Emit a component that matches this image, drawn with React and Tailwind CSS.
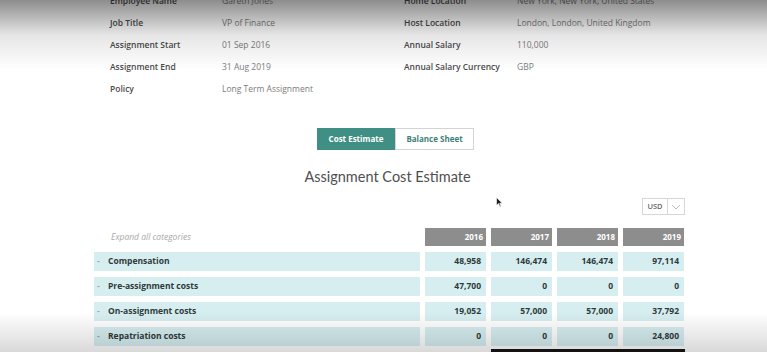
import React from "react";

const details = [
  ["Employee Name", "Gareth Jones", "Home Location", "New York, New York, United States"],
  ["Job Title", "VP of Finance", "Host Location", "London, London, United Kingdom"],
  ["Assignment Start", "01 Sep 2016", "Annual Salary", "110,000"],
  ["Assignment End", "31 Aug 2019", "Annual Salary Currency", "GBP"],
  ["Policy", "Long Term Assignment", "", ""],
];

const years = ["2016", "2017", "2018", "2019"];

const rows = [
  { name: "Compensation", values: ["48,958", "146,474", "146,474", "97,114"] },
  { name: "Pre-assignment costs", values: ["47,700", "0", "0", "0"] },
  { name: "On-assignment costs", values: ["19,052", "57,000", "57,000", "37,792"] },
  { name: "Repatriation costs", values: ["0", "0", "0", "24,800"] },
];

export default function App() {
  return (
    <div
      className="relative w-[767px] h-[352px] overflow-hidden bg-white"
      style={{ fontFamily: "'Open Sans', 'Liberation Sans', sans-serif" }}
    >
      {/* Assignment details */}
      <div className="-mt-[10px] flex flex-col">
        {details.map(([l1, v1, l2, v2]) => (
          <div key={l1} className="flex h-[22px] items-center text-[8.5px]">
            <div className="w-[110px]" />
            <div className="w-[112px] font-semibold text-[#4a4a4a]">{l1}</div>
            <div className="w-[182px] text-[#7c7c7c]">{v1}</div>
            <div className="w-[113px] font-semibold text-[#4a4a4a]">{l2}</div>
            <div className="text-[#7c7c7c]">{v2}</div>
          </div>
        ))}
      </div>

      {/* Tabs */}
      <div className="mt-[28px] flex justify-center pl-[24px]">
        <div className="flex h-[22px] text-[8px] font-bold">
          <div className="flex w-[78px] items-center justify-center bg-[#3f8f84] text-white">
            Cost Estimate
          </div>
          <div className="flex w-[79px] items-center justify-center border border-[#d4d4d4] text-[#3f7f78]">
            Balance Sheet
          </div>
        </div>
      </div>

      {/* Title */}
      <div
        className="mt-[18px] pl-[8px] text-center text-[14.5px] leading-[18px] text-[#4f4f4f]"
        style={{ fontFamily: "Lato, 'Noto Sans', sans-serif" }}
      >
        Assignment Cost Estimate
      </div>

      {/* Currency select */}
      <div className="mt-[12px] flex justify-end pr-[82px]">
        <div className="flex h-[17px] border border-[#d6d6d6] text-[7.5px]">
          <div className="flex w-[24px] items-center justify-center font-semibold text-[#666]">USD</div>
          <div className="flex w-[17px] items-center justify-center border-l border-[#d6d6d6]">
            <svg width="10" height="6" viewBox="0 0 10 6">
              <path d="M1 1 L5 5 L9 1" fill="none" stroke="#bbb" strokeWidth="1" />
            </svg>
          </div>
        </div>
      </div>

      {/* Table */}
      <div className="mt-[13px] ml-[94px] flex w-[591px] flex-col gap-[6px]">
        <div className="flex h-[18px] gap-[5px]">
          <div className="flex w-[326px] items-center pl-[17px] text-[8.5px] italic text-[#a8a8a8]">
            Expand all categories
          </div>
          {years.map((y) => (
            <div
              key={y}
              className="flex w-[61px] items-center justify-end bg-[#8d8d8d] pr-[3px] text-[8px] font-bold text-white"
            >
              {y}
            </div>
          ))}
        </div>
        {rows.map((r) => (
          <div key={r.name} className="flex h-[19px] gap-[5px] text-[8.5px] font-bold text-[#2f3a3a]">
            <div className="flex w-[326px] items-center bg-[#d6eef0]">
              <span className="w-[14px] pl-[3px] text-[#9ab]">-</span>
              <span>{r.name}</span>
            </div>
            {r.values.map((v, i) => (
              <div key={i} className="flex w-[61px] items-center justify-end bg-[#d6eef0] pr-[5px]">
                {v}
              </div>
            ))}
          </div>
        ))}
        <div className="-mt-[3px] flex gap-[5px]">
          <div className="w-[392px]" />
          <div className="h-[6px] w-[194px] bg-[#151515]" />
        </div>
      </div>

      {/* Mouse cursor */}
      <svg className="absolute left-[496px] top-[197px]" width="7" height="11" viewBox="0 0 7 11">
        <path d="M0.5 0.5 L0.5 8.5 L2.5 6.5 L4 10 L5 9.5 L3.7 6.2 L6.3 6.2 Z" fill="#222" stroke="#fff" strokeWidth="0.6" />
      </svg>

      {/* Video vignette */}
      <div className="pointer-events-none absolute left-0 top-0 h-[70px] w-full bg-gradient-to-b from-black/45 via-black/10 to-transparent" />
      <div className="pointer-events-none absolute bottom-0 left-0 h-[40px] w-full bg-gradient-to-t from-black/15 to-transparent" />
    </div>
  );
}
